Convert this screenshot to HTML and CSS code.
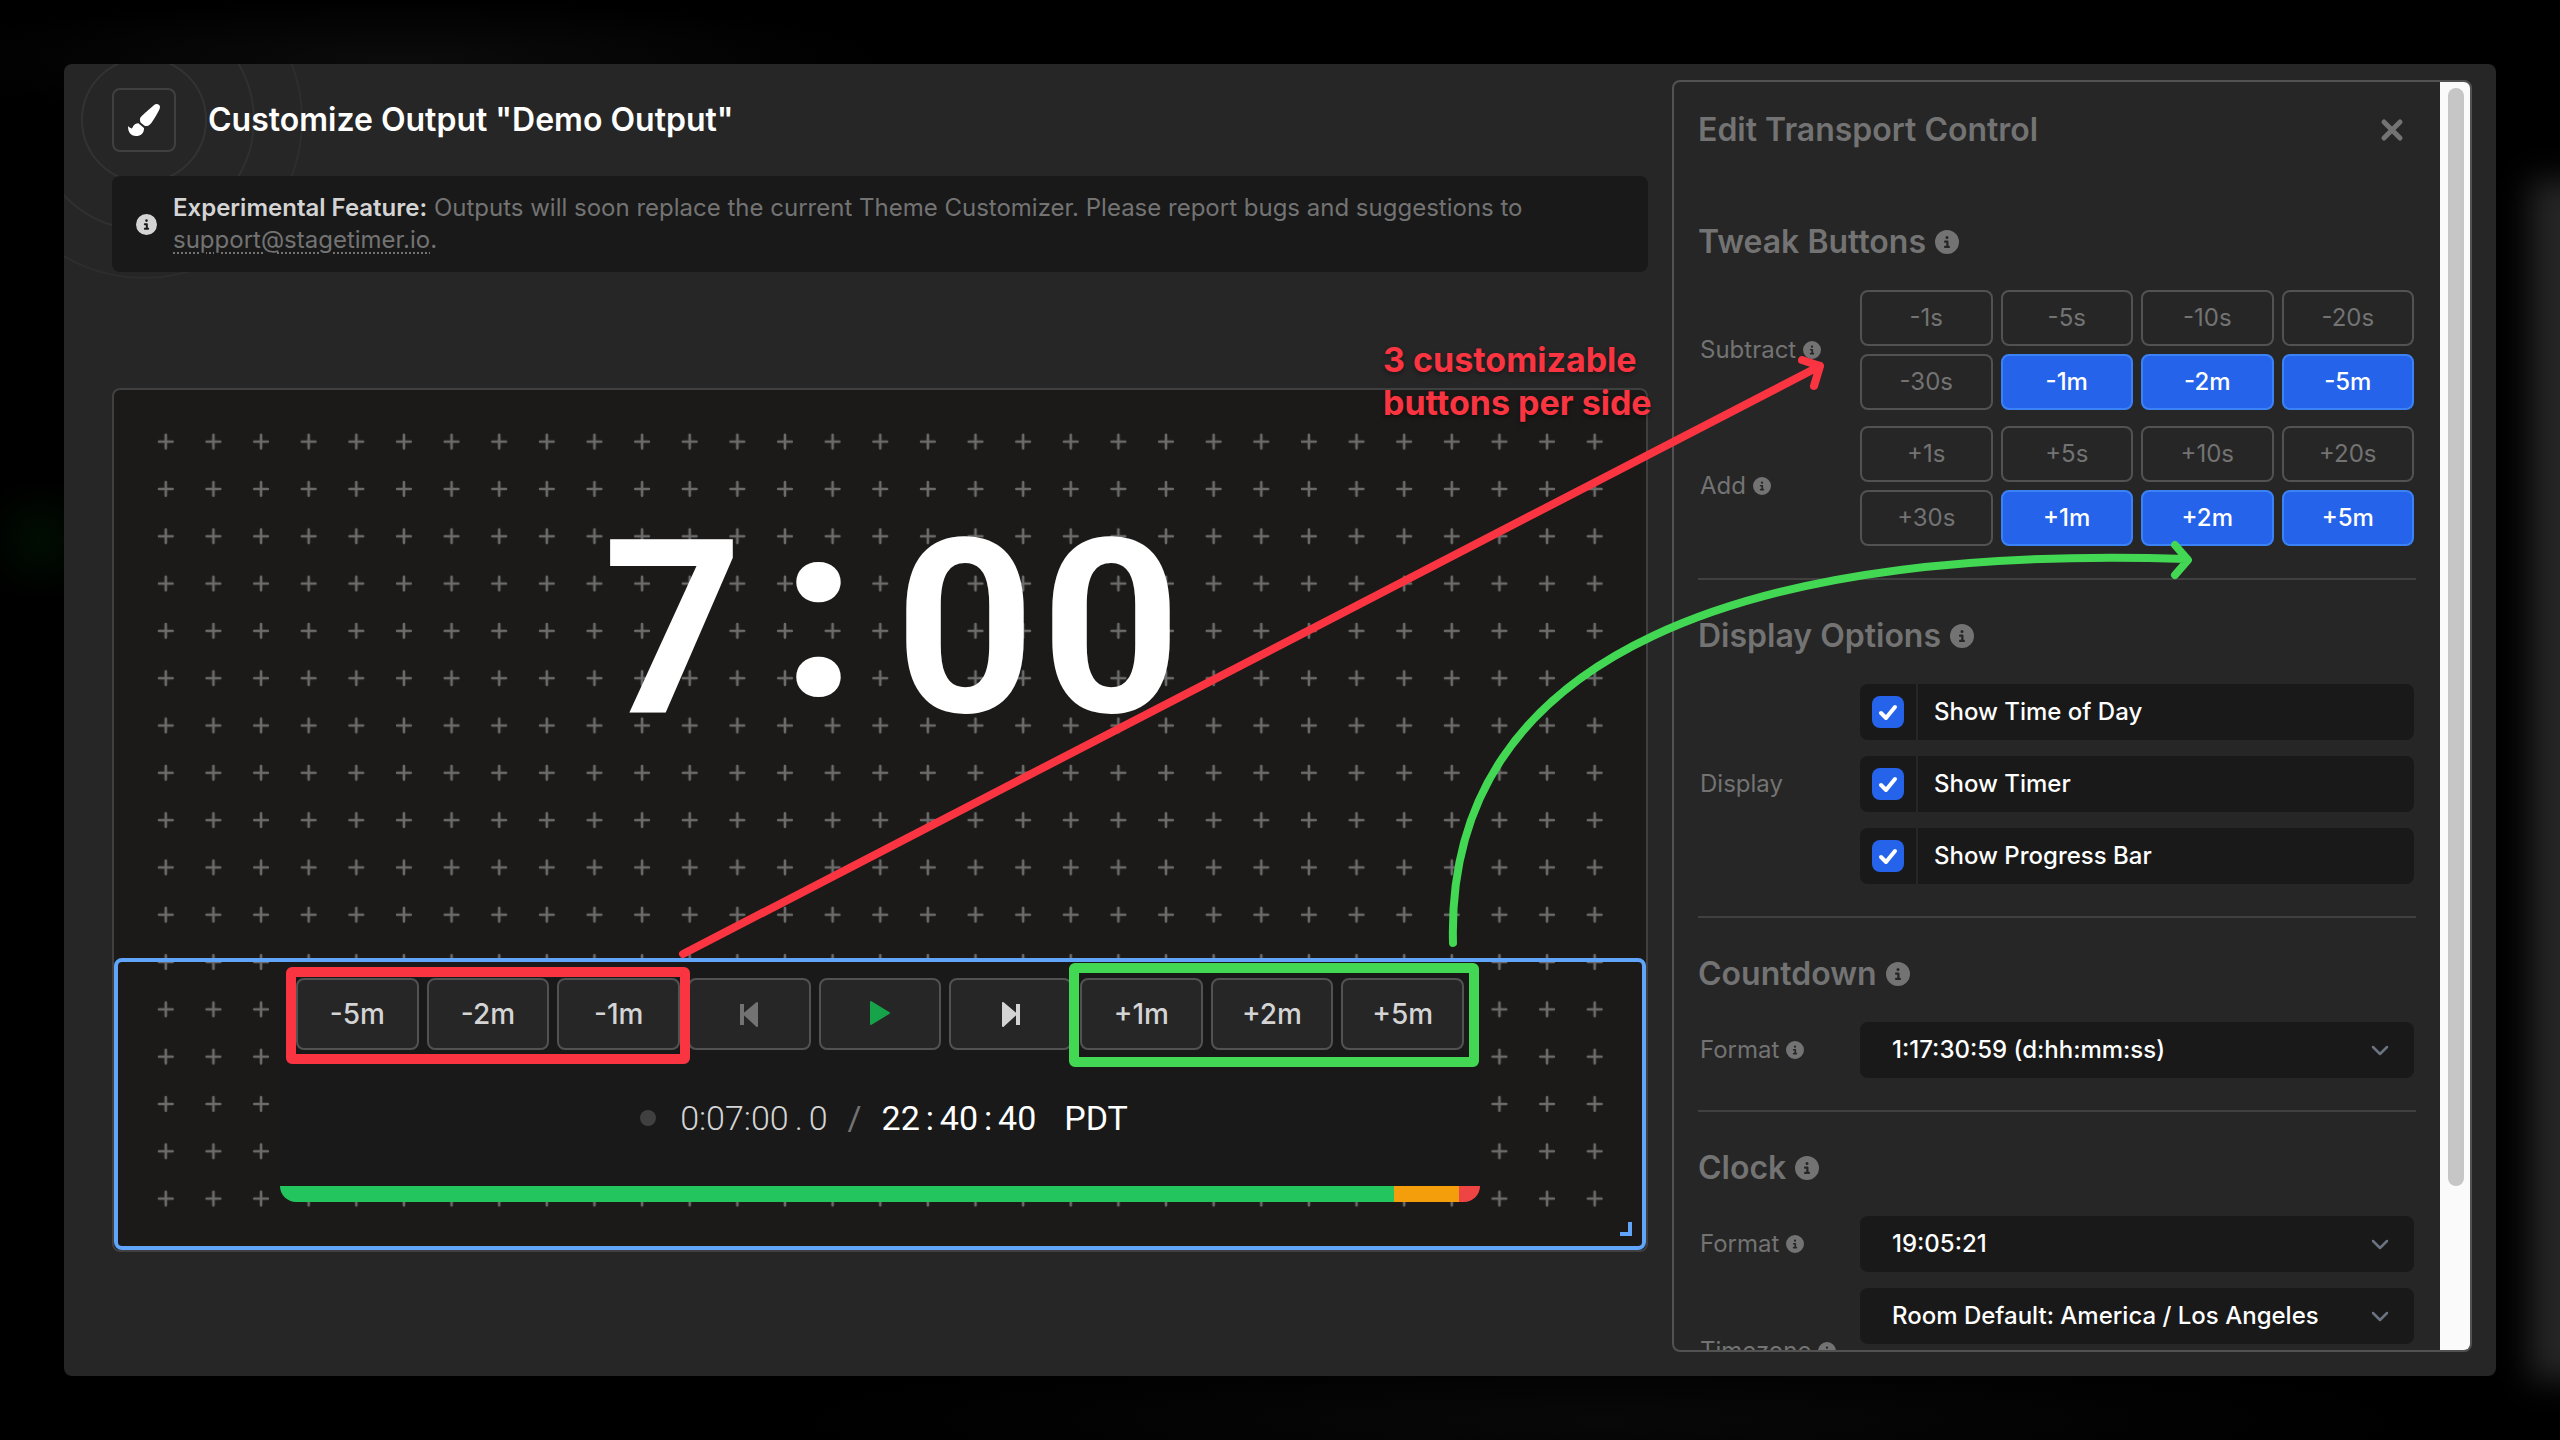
FILE: index.html
```html
<!DOCTYPE html>
<html lang="en">
<head>
    <meta charset="UTF-8">
    <meta name="viewport" content="width=device-width, initial-scale=1.0">
    <title>Customize Output</title>
    <link rel="stylesheet" href="styles.css">
</head>
<body>
    <!-- Shared icons -->
    <svg class="sprite" aria-hidden="true">
        <symbol id="icon-info" viewBox="0 0 512 512">
            <path d="M256 512A256 256 0 1 0 256 0a256 256 0 1 0 0 512zM216 336h24V272H216c-13 0-24-11-24-24s11-24 24-24h48c13 0 24 11 24 24v88h8c13 0 24 11 24 24s-11 24-24 24H216c-13 0-24-11-24-24s11-24 24-24zm40-208a32 32 0 1 1 0 64 32 32 0 1 1 0-64z"/>
        </symbol>
        <symbol id="icon-chevron" viewBox="0 0 20 20">
            <path d="M3 7l7 7 7-7" fill="none" stroke="currentColor" stroke-width="2.500" stroke-linecap="round" stroke-linejoin="round"/>
        </symbol>
    </svg>

    <div class="backdrop"></div>

    <div class="modal">
        <main class="main">
            <header class="header">
                <div class="rings"></div>
                <div class="header-icon">
                    <svg viewBox="0 0 512 512"><path d="M167.020 309.340c-40.120 2.580-76.530 17.860-97.190 72.300-2.350 6.210-8 9.980-14.590 9.980-11.110 0-45.460-27.670-55.250-34.350C0 439.620 37.930 512 128 512c75.860 0 128-43.770 128-120.190 0-3.110-.65-6.080-.97-9.130l-88.010-73.340zM457.890 0c-15.160 0-29.370 6.710-40.210 16.450C213.270 199.050 192 203.340 192 257.090c0 13.700 3.250 26.760 8.730 38.700l63.820 53.180c7.210 1.800 14.640 3.030 22.390 3.030 62.110 0 98.110-45.470 211.160-256.460 7.380-14.350 13.900-29.850 13.900-45.990C512 20.640 486 0 457.890 0z"/></svg>
                </div>
                <h1>Customize Output "Demo Output"</h1>
            </header>

            <div class="alert">
                <svg class="alert-icon"><use href="#icon-info"/></svg>
                <p><strong>Experimental Feature:</strong> Outputs will soon replace the current Theme Customizer. Please report bugs and suggestions to <a href="mailto:support@stagetimer.io">support@stagetimer.io</a>.</p>
            </div>

            <div class="preview">
                <div class="canvas">
                    <svg class="grid" viewBox="0 0 1532 860" aria-hidden="true">
                        <defs>
                            <pattern id="plus" x="28" y="28" width="47.630" height="47.310" patternUnits="userSpaceOnUse">
                                <path d="M17 23.600h13.600M23.800 16.800v13.600" stroke="#6b6b6b" stroke-width="2.600" stroke-linecap="round"/>
                            </pattern>
                        </defs>
                        <rect x="28" y="28" width="1476" height="804" fill="url(#plus)"/>
                    </svg>

                    <div class="timer"><span>7</span><span class="timer-colon">:</span><span>0</span><span>0</span></div>

                    <div class="selection">
                        <div class="transport">
                            <div class="transport-buttons">
                                <button type="button">-5m</button>
                                <button type="button">-2m</button>
                                <button type="button">-1m</button>
                                <button type="button" class="prev" aria-label="Previous">
                                    <svg viewBox="0 0 24 28"><path d="M5 4v21" stroke-width="4"/><path class="solid" d="M20 3v23L7 14z"/></svg>
                                </button>
                                <button type="button" class="play" aria-label="Start">
                                    <svg viewBox="0 0 24 28"><path class="solid" d="M3 2v22l18-11z"/></svg>
                                </button>
                                <button type="button" class="next" aria-label="Next">
                                    <svg viewBox="0 0 24 28"><path d="M19 4v21" stroke-width="4"/><path class="solid" d="M4 3v23L17 14z"/></svg>
                                </button>
                                <button type="button">+1m</button>
                                <button type="button">+2m</button>
                                <button type="button">+5m</button>
                            </div>
                            <div class="transport-time">
                                <span class="dot"></span>
                                <span class="remaining">0:07:00<span class="cell">.</span>0</span>
                                <span class="slash">/</span>
                                <span class="clock">22<span class="cell">:</span>40<span class="cell">:</span>40</span>
                                <span class="zone">PDT</span>
                            </div>
                            <div class="progress">
                                <div class="progress-green"></div>
                                <div class="progress-orange"></div>
                                <div class="progress-red"></div>
                            </div>
                        </div>
                        <div class="resize-handle"></div>
                    </div>
                </div>
            </div>
        </main>

        <aside class="panel">
            <div class="panel-content">
                <div class="panel-header">
                    <h2>Edit Transport Control</h2>
                    <button type="button" class="close" aria-label="Close">
                        <svg viewBox="0 0 24 24"><path d="M4 4l16 16M20 4L4 20"/></svg>
                    </button>
                </div>

                <section class="section">
                    <h3>Tweak Buttons <svg><use href="#icon-info"/></svg></h3>
                    <div class="field">
                        <span class="field-label">Subtract <svg><use href="#icon-info"/></svg></span>
                        <div class="tweaks">
                            <button type="button">-1s</button>
                            <button type="button">-5s</button>
                            <button type="button">-10s</button>
                            <button type="button">-20s</button>
                            <button type="button">-30s</button>
                            <button type="button" class="active">-1m</button>
                            <button type="button" class="active">-2m</button>
                            <button type="button" class="active">-5m</button>
                        </div>
                    </div>
                    <div class="field">
                        <span class="field-label">Add <svg><use href="#icon-info"/></svg></span>
                        <div class="tweaks">
                            <button type="button">+1s</button>
                            <button type="button">+5s</button>
                            <button type="button">+10s</button>
                            <button type="button">+20s</button>
                            <button type="button">+30s</button>
                            <button type="button" class="active">+1m</button>
                            <button type="button" class="active">+2m</button>
                            <button type="button" class="active">+5m</button>
                        </div>
                    </div>
                </section>

                <section class="section">
                    <h3>Display Options <svg><use href="#icon-info"/></svg></h3>
                    <div class="field">
                        <span class="field-label">Display</span>
                        <div class="checks">
                            <label class="check">
                                <span class="check-box">
                                    <input type="checkbox" checked>
                                    <svg viewBox="0 0 32 32"><path d="M9 17l5 5 9-11"/></svg>
                                </span>
                                <span class="check-text">Show Time of Day</span>
                            </label>
                            <label class="check">
                                <span class="check-box">
                                    <input type="checkbox" checked>
                                    <svg viewBox="0 0 32 32"><path d="M9 17l5 5 9-11"/></svg>
                                </span>
                                <span class="check-text">Show Timer</span>
                            </label>
                            <label class="check">
                                <span class="check-box">
                                    <input type="checkbox" checked>
                                    <svg viewBox="0 0 32 32"><path d="M9 17l5 5 9-11"/></svg>
                                </span>
                                <span class="check-text">Show Progress Bar</span>
                            </label>
                        </div>
                    </div>
                </section>

                <section class="section">
                    <h3>Countdown <svg><use href="#icon-info"/></svg></h3>
                    <div class="field">
                        <label class="field-label" for="countdown-format">Format <svg><use href="#icon-info"/></svg></label>
                        <div class="select">
                            <select id="countdown-format">
                                <option>1:17:30:59 (d:hh:mm:ss)</option>
                            </select>
                            <svg><use href="#icon-chevron"/></svg>
                        </div>
                    </div>
                </section>

                <section class="section">
                    <h3>Clock <svg><use href="#icon-info"/></svg></h3>
                    <div class="field">
                        <label class="field-label" for="clock-format">Format <svg><use href="#icon-info"/></svg></label>
                        <div class="select">
                            <select id="clock-format">
                                <option>19:05:21</option>
                            </select>
                            <svg><use href="#icon-chevron"/></svg>
                        </div>
                    </div>
                    <div class="field field-tall">
                        <label class="field-label" for="timezone">Timezone <svg><use href="#icon-info"/></svg></label>
                        <div class="select">
                            <select id="timezone">
                                <option>Room Default: America / Los Angeles</option>
                            </select>
                            <svg><use href="#icon-chevron"/></svg>
                        </div>
                    </div>
                </section>
            </div>
            <div class="scrollbar"><div class="scrollbar-thumb"></div></div>
        </aside>
    </div>

    <!-- Annotations drawn over the whole page -->
    <svg class="annotations" viewBox="0 0 2560 1440" aria-hidden="true">
        <g class="red">
            <path d="M683 954L1820 366M1802 360l18 6-6 20" stroke-width="8"/>
            <rect x="291" y="972" width="394" height="87" rx="1"/>
        </g>
        <g class="green">
            <path d="M1453 943C1445 650 1750 545 2187 559M2175 545l13 15-13 15" stroke-width="8"/>
            <rect x="1074" y="968" width="400" height="94" rx="1"/>
        </g>
    </svg>
    <p class="note">3 customizable<br>buttons per side</p>
</body>
</html>
```
FILE: styles.css
```css
* {
    box-sizing: border-box;
}
body {
    margin: 0;
    height: 100vh;
    padding: 64px;
    background: #000;
    color: #fff;
    font-family: Inter, "Liberation Sans", sans-serif;
    font-size: 24px;
    line-height: 32px;
    overflow: hidden;
    position: relative;
}
h1, h2, h3, p {
    margin: 0;
}
h1, h2, h3 {
    font-size: 32px;
    line-height: 40px;
    font-weight: 600;
}
button, select {
    font: inherit;
    color: inherit;
    margin: 0;
    padding: 0;
}
svg {
    display: block;
    fill: currentColor;
}
.sprite {
    position: absolute;
    width: 0;
    height: 0;
}
.backdrop {
    position: absolute;
    inset: 0;
    background:
        radial-gradient(ellipse 60px 60px at 40px 540px, #000d02, transparent),
        radial-gradient(ellipse 480px 60px at 400px 60px, #0b0b0b, transparent),
        radial-gradient(ellipse 800px 70px at 1600px 1420px, #080808, transparent);
}
.backdrop::after {
    content: "";
    position: absolute;
    top: 180px;
    right: -60px;
    bottom: 60px;
    width: 90px;
    background: #262626;
    filter: blur(16px);
}

/* Modal */
.modal {
    position: relative;
    display: grid;
    grid-template-columns: minmax(0, 1fr) 800px;
    gap: 24px;
    height: 100%;
    padding: 16px 24px 24px 48px;
    background: #262626;
    border-radius: 8px;
    overflow: hidden;
}
.main {
    display: flex;
    flex-direction: column;
    min-width: 0;
    padding-top: 8px;
}
.header {
    position: relative;
    display: flex;
    align-items: center;
    gap: 32px;
    margin-bottom: 24px;
}
.header h1 {
    position: relative;
}
.header-icon {
    display: flex;
    align-items: center;
    justify-content: center;
    width: 64px;
    height: 64px;
    border: 2px solid #404040;
    border-radius: 8px;
    background: #262626;
    position: relative;
}
.header-icon svg {
    width: 32px;
    height: 32px;
}
.rings {
    position: absolute;
    left: -31px;
    top: -31px;
    width: 126px;
    height: 126px;
    border: 2px solid #333;
    border-radius: 50%;
}
.rings::before, .rings::after {
    content: "";
    position: absolute;
    border: 2px solid #303030;
    border-radius: 50%;
}
.rings::before {
    inset: -50px;
}
.rings::after {
    inset: -98px;
    border-color: #2d2d2d;
}
.alert {
    position: relative;
    display: flex;
    align-items: center;
    gap: 16px;
    padding: 16px 24px;
    background: #191919;
    border-radius: 8px;
    color: #737373;
}
.alert strong {
    color: #d4d4d4;
    font-weight: 600;
}
.alert a {
    color: inherit;
    text-decoration: underline dotted 2px;
    text-underline-offset: 4px;
}
.alert-icon {
    flex: none;
    width: 21px;
    height: 21px;
    color: #d4d4d4;
}

/* Preview */
.preview {
    flex: 1;
    display: flex;
    align-items: center;
    padding-top: 16px;
}
.canvas {
    position: relative;
    width: 100%;
    aspect-ratio: 16 / 9;
    display: flex;
    flex-direction: column;
    background: #1b1a18;
    border: 2px solid #404040;
    border-radius: 8px;
}
.grid {
    position: absolute;
    inset: 0;
    width: 100%;
    height: 100%;
}
.timer {
    position: relative;
    flex: 1;
    display: flex;
    align-items: center;
    justify-content: center;
    padding-left: 24px;
    padding-bottom: 90px;
    font-family: Roboto, "Liberation Sans", sans-serif;
    font-size: 244px;
    line-height: 280px;
    font-weight: 700;
}
.timer span {
    width: 146px;
    text-align: center;
}
.timer .timer-colon {
    padding-bottom: 32px;
    font-weight: 900;
}
.selection {
    position: relative;
    height: 34%;
    border: 4px solid #60a5fa;
    border-radius: 8px;
}
.transport {
    width: 1200px;
    max-width: 100%;
    margin: 0 auto;
    padding-top: 16px;
    background: #191919;
    border-radius: 0 0 16px 16px;
    overflow: hidden;
}
.transport-buttons {
    display: grid;
    grid-template-columns: repeat(9, 1fr);
    gap: 8px;
    padding: 0 16px;
}
.transport-buttons button {
    display: flex;
    align-items: center;
    justify-content: center;
    height: 72px;
    background: #262626;
    border: 2px solid #525252;
    border-radius: 8px;
    color: #d4d4d4;
    font-size: 28px;
    font-weight: 500;
}
.transport-buttons svg {
    width: 24px;
    height: 28px;
    stroke: currentColor;
    stroke-linejoin: round;
}
.transport-buttons .solid {
    stroke-width: 2;
}
.transport-buttons .prev {
    color: #737373;
}
.transport-buttons .play {
    color: #16a34a;
}
.transport-time {
    display: flex;
    align-items: center;
    justify-content: center;
    height: 136px;
    padding-left: 8px;
    font-family: Roboto, "Liberation Sans", sans-serif;
    font-size: 34px;
}
.dot {
    width: 16px;
    height: 16px;
    margin-right: 24px;
    border-radius: 50%;
    background: #404040;
}
.remaining {
    color: #d4d4d4;
    font-weight: 300;
}
.slash {
    margin: 0 20px;
    color: #737373;
}
.cell {
    display: inline-block;
    width: 20px;
    text-align: center;
}
.zone {
    margin-left: 28px;
}
.progress {
    display: flex;
    height: 16px;
}
.progress-green {
    flex: 1114;
    background: #22c55e;
}
.progress-orange {
    flex: 65;
    background: #f59e0b;
}
.progress-red {
    flex: 21;
    background: #ef4444;
}
.resize-handle {
    position: absolute;
    right: 10px;
    bottom: 10px;
    width: 12px;
    height: 14px;
    border: solid #60a5fa;
    border-width: 0 4px 4px 0;
}

/* Side panel */
.panel {
    display: flex;
    min-height: 0;
    border: 2px solid #525252;
    border-radius: 8px;
    overflow: hidden;
    color: #737373;
}
.panel-content {
    flex: 1;
    min-width: 0;
    padding: 28px 24px 0;
}
.panel-header {
    display: flex;
    align-items: center;
    justify-content: space-between;
    margin-bottom: 36px;
}
.close {
    width: 48px;
    height: 40px;
    display: flex;
    align-items: center;
    justify-content: center;
    background: none;
    border: 0;
}
.close svg {
    width: 24px;
    height: 24px;
    stroke: currentColor;
    stroke-width: 5;
    stroke-linecap: round;
}
.section {
    padding: 36px 0 32px;
}
.section + .section {
    border-top: 2px solid #404040;
}
.section h3 {
    display: flex;
    align-items: center;
    gap: 9px;
    margin-bottom: 28px;
}
.section h3 svg {
    width: 24px;
    height: 24px;
}
.field {
    display: grid;
    grid-template-columns: 160px minmax(0, 1fr);
    align-items: center;
    padding: 0 2px;
}
.field + .field {
    margin-top: 16px;
}
.field-tall {
    height: 126px;
}
.field-tall .select {
    align-self: start;
}
.field-label {
    display: flex;
    align-items: center;
    gap: 7px;
}
.field-label svg {
    width: 18px;
    height: 18px;
}
.tweaks {
    display: grid;
    grid-template-columns: repeat(4, 1fr);
    gap: 8px;
}
.tweaks button {
    height: 56px;
    background: transparent;
    border: 2px solid #525252;
    border-radius: 8px;
}
.tweaks .active {
    background: #2563eb;
    border-color: #3b82f6;
    color: #fff;
    font-weight: 500;
}
.checks {
    display: grid;
    gap: 16px;
}
.check {
    display: flex;
    height: 56px;
    background: #191919;
    border-radius: 8px;
    color: #fff;
    font-weight: 500;
}
.check-box {
    position: relative;
    display: flex;
    align-items: center;
    padding: 0 12px;
    border-right: 2px solid #262626;
}
.check-box input {
    appearance: none;
    width: 32px;
    height: 32px;
    margin: 0;
    border-radius: 8px;
    background: #404040;
}
.check-box input:checked {
    background: #2563eb;
}
.check-box svg {
    position: absolute;
    left: 12px;
    top: 12px;
    width: 32px;
    height: 32px;
    fill: none;
    stroke: #fff;
    stroke-width: 4;
    stroke-linecap: round;
    stroke-linejoin: round;
}
.check-text {
    padding: 12px 16px;
}
.select {
    position: relative;
}
.select select {
    appearance: none;
    display: block;
    width: 100%;
    height: 56px;
    padding: 0 72px 0 32px;
    background: #191919;
    border: 0;
    border-radius: 8px;
    color: #fff;
    font-weight: 500;
}
.select svg {
    position: absolute;
    right: 24px;
    top: 18px;
    width: 20px;
    height: 20px;
    color: #6b7280;
}
.scrollbar {
    width: 30px;
    padding: 6px 6px 0 8px;
    background: #fafafa;
}
.scrollbar-thumb {
    width: 16px;
    height: 87%;
    border-radius: 8px;
    background: #c6c6c6;
}

/* Annotations */
.annotations {
    position: absolute;
    left: 0;
    top: 0;
    width: 100%;
    fill: none;
    stroke-width: 10;
    stroke-linecap: round;
    stroke-linejoin: round;
    pointer-events: none;
}
.red {
    stroke: #fb3441;
}
.green {
    stroke: #43d854;
}
.note {
    position: absolute;
    left: 1383px;
    top: 338px;
    color: #fb3441;
    font-size: 34px;
    line-height: 43px;
    font-weight: 700;
    text-shadow: 0 2px 4px rgba(0, 0, 0, 0.4);
}
```
